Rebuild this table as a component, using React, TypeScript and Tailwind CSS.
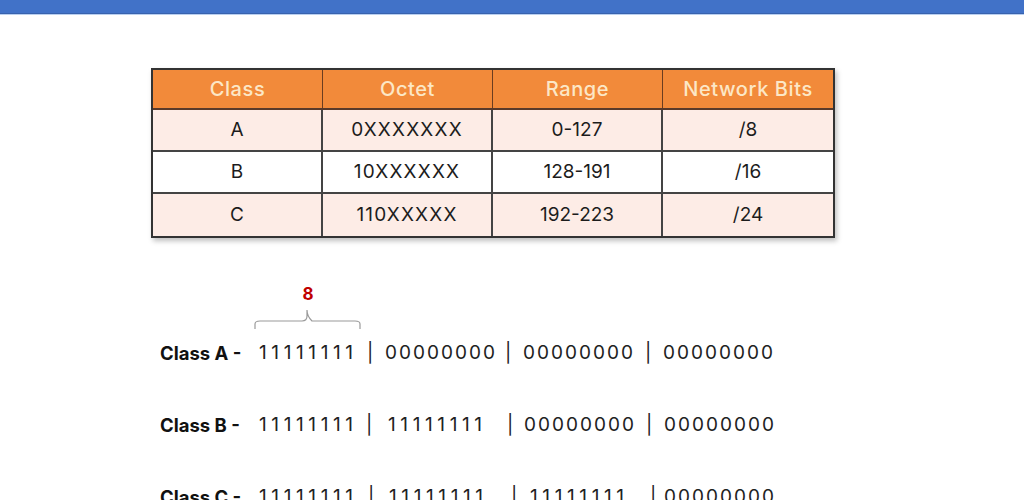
import React from "react";

const rows = [
  ["A", "0XXXXXXX", "0-127", "/8"],
  ["B", "10XXXXXX", "128-191", "/16"],
  ["C", "110XXXXX", "192-223", "/24"],
];

function Sep({ w, pl }: { w: string; pl: string }) {
  return <span className={`${w} ${pl} text-left text-[#222] whitespace-nowrap`}>|</span>;
}

function Ones({ w }: { w: string }) {
  return <span className={`${w} tracking-[4.6px] whitespace-nowrap`}>11111111</span>;
}

function Zeros({ w }: { w: string }) {
  return <span className={`${w} tracking-[2px] whitespace-nowrap`}>00000000</span>;
}

export default function App() {
  return (
    <div className="w-[1024px] h-[500px] overflow-hidden bg-white" style={{ fontFamily: "Inter, 'Open Sans', sans-serif" }}>
      <div className="h-[13px] bg-[#4172c8]" />
      <div className="h-[1px] bg-[#3862ad]" />
      <div className="h-[1px] bg-[#b9cff0]" />

      <div className="pl-[151px] pt-[53px]">
        <div className="w-[684px] border-2 border-[#333] shadow-[2px_3px_5px_rgba(0,0,0,0.25)]">
          <div className="grid grid-cols-4 h-[40px] bg-[#f28a3a] text-[#fce7c6] text-[20px] font-medium tracking-[0.6px] border-b-2 border-[#5a3a2a]">
            {["Class", "Octet", "Range", "Network Bits"].map((h, i) => (
              <div key={h} className={`flex items-center justify-center ${i < 3 ? "border-r border-[#6b3d20]" : ""}`}>{h}</div>
            ))}
          </div>
          {rows.map((r, ri) => (
            <div key={ri} className={`grid grid-cols-4 h-[42px] text-[19px] text-[#1c1c1c] ${ri % 2 === 0 ? "bg-[#fdece6]" : "bg-white"} ${ri < 2 ? "border-b-2 border-[#444]" : ""}`}>
              {r.map((c, i) => (
                <div key={i} className={`flex items-center justify-center ${i === 1 ? "tracking-[1.2px]" : ""} ${i < 3 ? "border-r-2 border-[#444]" : ""}`}>{c}</div>
              ))}
            </div>
          ))}
        </div>
      </div>

      <div className="pl-[160px] pt-[46px]">
        <div className="ml-[94px] w-[108px] flex flex-col items-center">
          <span className="text-[17px] font-bold text-[#c00000] leading-[20px]">8</span>
          <svg width="108" height="24" viewBox="0 0 108 24" className="mt-[2px]">
            <path d="M1 23 V18 Q1 15 6 15 H48 Q53 15 53 10 V4 Q53 10 58 15 H101 Q106 15 106 18 V23" fill="none" stroke="#9a9a9a" strokeWidth="1.2" />
          </svg>
        </div>

        <div className="flex flex-col gap-[46px] mt-[10px] text-[19px] text-[#222] leading-[26px]">
          <div className="flex items-center">
            <span className="w-[99px] font-bold text-[18.5px] text-[#111] whitespace-nowrap">Class A -</span>
            <Ones w="w-[97px]" />
            <Sep w="w-[29px]" pl="pl-[11px]" />
            <Zeros w="w-[108px]" />
            <Sep w="w-[30px]" pl="pl-[12px]" />
            <Zeros w="w-[110px]" />
            <Sep w="w-[30px]" pl="pl-[12px]" />
            <Zeros w="w-[110px]" />
          </div>
          <div className="flex items-center">
            <span className="w-[99px] font-bold text-[18.5px] text-[#111] whitespace-nowrap">Class B -</span>
            <Ones w="w-[97px]" />
            <Sep w="w-[32px]" pl="pl-[10px]" />
            <Ones w="w-[98px]" />
            <Sep w="w-[38px]" pl="pl-[21px]" />
            <Zeros w="w-[110px]" />
            <Sep w="w-[30px]" pl="pl-[12px]" />
            <Zeros w="w-[110px]" />
          </div>
          <div className="flex items-center">
            <span className="w-[99px] font-bold text-[18.5px] text-[#111] whitespace-nowrap">Class C -</span>
            <Ones w="w-[97px]" />
            <Sep w="w-[33px]" pl="pl-[12px]" />
            <Ones w="w-[97px]" />
            <Sep w="w-[44px]" pl="pl-[25px]" />
            <Ones w="w-[97px]" />
            <Sep w="w-[37px]" pl="pl-[23px]" />
            <Zeros w="w-[110px]" />
          </div>
        </div>
      </div>
    </div>
  );
}
